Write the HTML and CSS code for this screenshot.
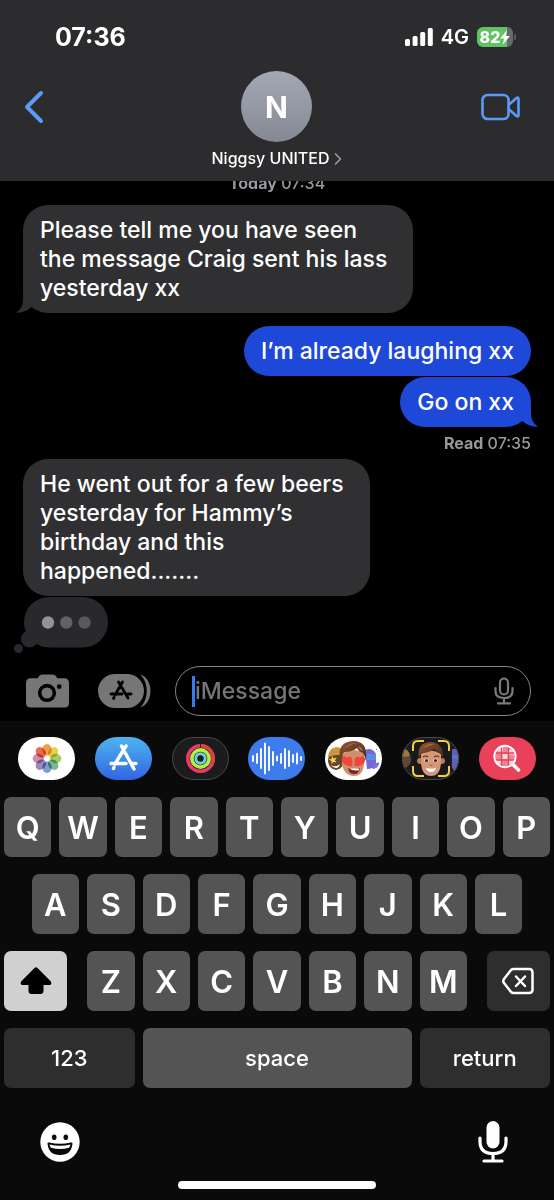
FILE: index.html
```
<!DOCTYPE html>
<html lang="en">
<head>
<meta charset="utf-8">
<meta name="viewport" content="width=device-width, initial-scale=1">
<title>Messages</title>
<link rel="stylesheet" href="styles.css">
</head>
<body>
<div class="phone">
  <header class="header">
    <div class="status">
      <time class="clock">07:36</time>
      <div class="indicators">
        <svg class="signal" viewBox="0 0 28 18" aria-label="Signal"><g fill="#fff"><rect x="0" y="11" width="5" height="7" rx="1.6"/><rect x="7.6" y="8" width="5" height="10" rx="1.6"/><rect x="15.2" y="4" width="5" height="14" rx="1.6"/><rect x="22.8" y="0" width="5" height="18" rx="1.6"/></g></svg>
        <span class="network">4G</span>
        <span class="battery"><span class="level">82</span><svg class="bolt" viewBox="0 0 9 14" aria-hidden="true"><path d="M6.500 0 0 8h3.700L2.300 14 9 5.600H5.100z" fill="#fff"/></svg></span>
      </div>
    </div>
    <nav class="nav">
      <button class="plain back" aria-label="Back"><svg viewBox="0 0 20 32"><path d="M17 2 3 16l14 14" fill="none" stroke="#5c9bf5" stroke-width="4" stroke-linecap="round" stroke-linejoin="round"/></svg></button>
      <button class="plain contact">
        <span class="avatar">N</span>
        <span class="name">Niggsy UNITED <svg viewBox="0 0 8 12" aria-hidden="true"><path d="M1.500 1 6.500 6l-5 5" fill="none" stroke="#99999e" stroke-width="1.700" stroke-linecap="round" stroke-linejoin="round"/></svg></span>
      </button>
      <button class="plain video" aria-label="FaceTime"><svg viewBox="0 0 40 28"><g fill="none" stroke="#5c9bf5" stroke-width="2.600" stroke-linejoin="round"><rect x="2.500" y="2" width="26" height="24" rx="5"/><path d="M28.500 12 36.500 5q2-1.300 2 1v16q0 2.300-2 1L28.500 16"/></g></svg></button>
    </nav>
  </header>

  <main class="thread">
    <p class="stamp"><b>Today</b> 07:34</p>
    <p class="bubble received">Please tell me you have seen<br>the message Craig sent his lass<br>yesterday xx<svg class="tail" viewBox="0 0 24 22" aria-hidden="true"><path d="M7 0v8q0 10-7 13.600 8 1 15-5l9-6z"/></svg></p>
    <p class="bubble sent">I’m already laughing xx</p>
    <p class="bubble sent follow">Go on xx<svg class="tail" viewBox="0 0 24 22" aria-hidden="true"><path d="M17 0v8q0 10 7 13.600-8 1-15-5L0 10z"/></svg></p>
    <p class="receipt"><b>Read</b> 07:35</p>
    <p class="bubble received">He went out for a few beers<br>yesterday for Hammy’s<br>birthday and this<br>happened.......</p>
    <div class="typing" role="img" aria-label="Typing"><svg viewBox="0 0 94 57"><g fill="#29282d"><rect x="10" y="0" width="84" height="50.500" rx="25"/><circle cx="15.500" cy="42" r="8.500"/><circle cx="4.500" cy="51.500" r="4.500"/></g><circle cx="34" cy="25.500" r="6.200" fill="#939297"/><circle cx="52.300" cy="25.500" r="6.200" fill="#626166"/><circle cx="70.500" cy="25.500" r="6.200" fill="#5a595e"/></svg></div>
  </main>

  <form class="composer">
    <button type="button" class="plain camera" aria-label="Camera"><svg viewBox="0 0 44 34"><path d="M5 4h7q1.500-4 5-4h10q3.500 0 5 4h7q5 0 5 5v20q0 5-5 5H5q-5 0-5-5V9q0-5 5-5z" fill="#767676"/><circle cx="21.500" cy="19" r="7.500" fill="none" stroke="#000" stroke-width="3.600"/><circle cx="34" cy="12.500" r="2.400"/></svg></button>
    <button type="button" class="plain apps" aria-label="Apps"><svg viewBox="0 0 54 34"><rect width="46" height="34" rx="17" fill="#767676"/><path d="M42 .500C56 4 56 30 42 33.500 51 26 51 8 42 .500z" fill="#767676"/><g fill="none" stroke="#000" stroke-width="2.800" stroke-linecap="round"><path d="M20.500 8 30 24M24.500 8 17 21M13 20h11M30 20h3M15.500 24.500l.500-1"/></g></svg></button>
    <label class="field">
      <input type="text" aria-label="Message" placeholder="iMessage">
      <svg class="dictate" viewBox="0 0 20 28" aria-hidden="true"><g fill="none" stroke="#7b7b7f" stroke-width="2.200" stroke-linecap="round"><rect x="6" y="1.500" width="8" height="16" rx="4"/><path d="M1.500 11v3q0 7 8.500 7t8.500-7v-3M10 21v5M4 26.300h12"/></g></svg>
    </label>
  </form>

  <section class="keyboard" aria-label="Keyboard">
    <div class="strip">
      <button class="plain app" aria-label="Photos"><svg viewBox="0 0 57 43"><rect width="57" height="43" rx="21.500" fill="#fff"/><g class="petals" transform="translate(29 21.500)"><ellipse cy="-8.700" rx="4.700" ry="5.700" fill="#f0a04a"/><ellipse cy="-8.700" rx="4.700" ry="5.700" fill="#e3d452" transform="rotate(45)"/><ellipse cy="-8.700" rx="4.700" ry="5.700" fill="#a9cb6b" transform="rotate(90)"/><ellipse cy="-8.700" rx="4.700" ry="5.700" fill="#79b795" transform="rotate(135)"/><ellipse cy="-8.700" rx="4.700" ry="5.700" fill="#7d9fd0" transform="rotate(180)"/><ellipse cy="-8.700" rx="4.700" ry="5.700" fill="#9b8abd" transform="rotate(225)"/><ellipse cy="-8.700" rx="4.700" ry="5.700" fill="#cb8db0" transform="rotate(270)"/><ellipse cy="-8.700" rx="4.700" ry="5.700" fill="#ea6a52" transform="rotate(315)"/></g></svg></button>
      <button class="plain app" aria-label="App Store"><svg viewBox="0 0 57 43"><defs><linearGradient id="store" x2="0" y2="1"><stop stop-color="#4db5f0"/><stop offset="1" stop-color="#3264e4"/></linearGradient></defs><rect width="57" height="43" rx="21.500" fill="url(#store)"/><g fill="none" stroke="#fff" stroke-width="3.400" stroke-linecap="round"><path d="M26.500 9 39 32M31 9 20 27M16 26.500h15M37 26.500h4M18.500 31.500l.500-1"/></g></svg></button>
      <button class="plain app" aria-label="Fitness"><svg viewBox="0 0 57 43"><rect x=".5" y=".5" width="56" height="42" rx="21" fill="#1c1c1e" stroke="#49494c"/><g fill="none" stroke-width="3.600"><circle cx="28.500" cy="21.500" r="12.700" stroke="#e93b6b"/><path d="M28.500 8.800a12.700 12.700 0 0 1 11 19" stroke="#df403d"/><circle cx="28.500" cy="21.500" r="8.600" stroke="#b5ed49"/><circle cx="28.500" cy="21.500" r="4.700" stroke="#67d6db" stroke-width="3"/></g><path d="M28.500 7v4" stroke="#1c1c1e"/></svg></button>
      <button class="plain app" aria-label="Audio"><svg viewBox="0 0 57 43"><rect width="57" height="43" rx="21.500" fill="#3e7bed"/><path d="M5 19v5M9 17v9M13 12v19M17 6.500v30M21 10v23M25 15v13M29 19.500v4M33 17v9M37 12v19M41 14v15M45 18v7M49 16.500v10M53 20v3" stroke="#fff" stroke-width="1.900" stroke-linecap="round"/></svg></button>
      <button class="plain app" aria-label="Memoji stickers"><svg viewBox="0 0 57 43"><defs><linearGradient id="hair" x2="1" y2="1"><stop stop-color="#8f5632"/><stop offset="1" stop-color="#4a2a1b"/></linearGradient></defs><rect width="57" height="43" rx="21.500" fill="#fff"/><ellipse cx="11" cy="23" rx="8" ry="10" fill="#6b4429"/><path d="M3 20q1-10 9-10 7 1 8 8-8-1-17 2z" fill="#c6993d"/><path d="m7 19 1.500 2.500 3-1-1.500 3 1.500 2-3-.500-2 2v-3l-3-1.500 3-.500z" fill="#f6d34a"/><path d="M6 28q5 3 9-1-1 4-4 4t-5-3z" fill="#fff"/><path d="M40 13q7-3 11 4v9q-2 6-9 6z" fill="#7468d1"/><path d="M40 17h11v6H40z" fill="#5b8be4"/><path d="m48 27 6-1-2 4-5 1zM51 13l1-1M48 31l2 1" stroke="#7666e1" fill="#8171db"/><path d="M18 16q10-6 21 0v11q-1 12-10 12-10 0-12-12z" fill="#cf8f6c"/><path d="M15 22Q12 5 28 4q15 0 13 18l-3-6q-4-1-6-5-5 4-13 4-2 3-4 7z" fill="url(#hair)"/><path d="M19 12q5-7 13-6-6 1-13 6zM33 9q4 1 5 5-4-1-5-5z" fill="#ad7048"/><path d="M27 29c-5 1-9-2-10-5-1-5 4-6 5-3 3-4 7 0 5 8zM30 29c6 1 9-2 10-5 1-5-4-6-5-3-3-4-7 0-5 8z" fill="#f34439"/><path d="M23 31q7 2 12 0-1 6-6 6t-6-6z" fill="#74272b"/><path d="M24 31.500h10v1.800q-6 1-10-1.800z" fill="#fff"/></svg></button>
      <button class="plain app" aria-label="Memoji"><svg viewBox="0 0 57 43"><defs><clipPath id="pill"><rect width="57" height="43" rx="21.500"/></clipPath></defs><g clip-path="url(#pill)"><rect width="57" height="43" fill="#1c1c1e"/><circle cx="1" cy="23" r="8" fill="#624634"/><path d="M0 11q7 1 8 8L0 20z" fill="#9a7941"/><path d="M50 12h8v22h-5q-4-2-3-9z" fill="#655db4"/><path d="M50 18h8v4h-8z" fill="#527ac6"/><rect x="11" y="3" width="36" height="37" rx="6" fill="#19191b"/><circle cx="18" cy="24" r="3" fill="#bd7c5b"/><circle cx="40" cy="24" r="3" fill="#bd7c5b"/><path d="M19 17q10-7 20 0v9q-1 13-10 13-9 0-10-13z" fill="#d69875"/><path d="M17 22Q14 6 28 5q14 0 13 17l-3-6q-4-1-6-4-5 4-12 4-2 2-3 6z" fill="url(#hair)"/><path d="M21 11q5-5 12-4-6 1-12 4z" fill="#ad7048"/><path d="M21 20q3-2 5 0M32 20q3-2 5 0" stroke="#5c3021" stroke-width="1.200" fill="none"/><ellipse cx="24.500" cy="23.500" rx="2.200" ry="1.800" fill="#fff"/><ellipse cx="33.500" cy="23.500" rx="2.200" ry="1.800" fill="#fff"/><circle cx="24.500" cy="23.500" r="1.600" fill="#332720"/><circle cx="33.500" cy="23.500" r="1.600" fill="#332720"/><path d="M27.500 28q1.500 1 3 0" stroke="#a3624a" fill="none"/><path d="M24 31q5 1.500 10 0-1 4-5 4t-5-4z" fill="#fff"/><path d="M11 14V9q0-5 5-5h6M36 4h6q5 0 5 5v5M47 29v5q0 5-5 5h-6M22 39h-6q-5 0-5-5v-5" fill="none" stroke="#f4ce42" stroke-width="2"/></g><rect x=".5" y=".5" width="56" height="42" rx="21" fill="none" stroke="#49494c"/></svg></button>
      <button class="plain app" aria-label="Images"><svg viewBox="0 0 57 43"><defs><clipPath id="lens"><circle cx="26" cy="19.500" r="10"/></clipPath></defs><rect width="57" height="43" rx="21.500" fill="#e84159"/><circle cx="26" cy="19.500" r="10" fill="#ef8492"/><path d="M19 8.500h5v6h-5zM30 12.500h6v5h-6zM23.500 17h5v5h-5zM17 22.500h6v5h-6zM30 22.500h5v5h-5z" fill="#fbdadd" clip-path="url(#lens)"/><path d="M22.500 9.500v20M29.500 9.500v20M16 16h20M16 23h20" stroke="#e84159" stroke-width="1.300" clip-path="url(#lens)"/><circle cx="26" cy="19.500" r="10.700" fill="none" stroke="#fff" stroke-width="1.900"/><path d="m34.500 28 5 5" stroke="#fff" stroke-width="3.600" stroke-linecap="round"/></svg></button>
    </div>
    <div class="keys">
      <button class="key">Q</button><button class="key">W</button><button class="key">E</button><button class="key">R</button><button class="key">T</button><button class="key">Y</button><button class="key">U</button><button class="key">I</button><button class="key">O</button><button class="key">P</button>
      <button class="key inset">A</button><button class="key">S</button><button class="key">D</button><button class="key">F</button><button class="key">G</button><button class="key">H</button><button class="key">J</button><button class="key">K</button><button class="key">L</button>
      <button class="key shift" aria-label="Shift"><svg viewBox="0 0 32 28"><path d="M14.500 1q1.500-1.300 3 0L30.500 14q2 3-.500 4h-6.500v6q0 3-3 3h-9q-3 0-3-3v-6H2q-2.500-1-.500-4z"/></svg></button><button class="key">Z</button><button class="key">X</button><button class="key">C</button><button class="key">V</button><button class="key">B</button><button class="key">N</button><button class="key">M</button><button class="key delete" aria-label="Delete"><svg viewBox="0 0 32 28"><g fill="none" stroke="#fff" stroke-width="2.500" stroke-linecap="round" stroke-linejoin="round"><path d="M11.500 2H27q3.500 0 3.500 3.500v17Q30.500 26 27 26H11.500Q10 26 9 25L2 16q-1.500-2 0-4L9 3q1-1 2.500-1z"/><path d="m14 9.500 9 9.500M23 9.500 14 19"/></g></svg></button>
      <button class="key word dark">123</button><button class="key word space">space</button><button class="key word dark">return</button>
    </div>
    <div class="tools">
      <button class="plain emoji" aria-label="Emoji"><svg viewBox="0 0 40 40"><circle cx="20" cy="20" r="19.700" fill="#fff"/><g fill="#0a0a0a"><ellipse cx="14.200" cy="15.300" rx="2.300" ry="2.800"/><ellipse cx="25.800" cy="15.300" rx="2.300" ry="2.800"/><path d="M7.500 21.500q0-1.500 1.500-1 11 2.500 22 0 1.500-.500 1.500 1Q31.500 33 20 33T7.500 21.500z"/></g><path d="M9.500 22.500q10.500 2.500 21 0-.200 2-1.500 3.300-9 2.400-18 0-1.300-1.300-1.500-3.300z" fill="#fff"/></svg></button>
      <button class="plain mic" aria-label="Dictate"><svg viewBox="0 0 30 42"><rect x="8.500" y="0" width="13" height="27.500" rx="6.500" fill="#fff"/><g fill="none" stroke="#fff" stroke-width="3.200" stroke-linecap="round"><path d="M2 17v3.500Q2 32.500 15 32.500T28 20.500V17M15 33v6M6 40h18"/></g></svg></button>
    </div>
    <div class="home"></div>
  </section>
</div>
</body>
</html>
```
FILE: styles.css
```
* { box-sizing: border-box; }
body { margin: 0; background: #000; color: #fff; font-family: Inter, "Liberation Sans", sans-serif; }
svg { display: block; width: 100%; height: 100%; overflow: visible; }
p { margin: 0; }
button, input { font: inherit; color: inherit; }
button { cursor: pointer; }
.plain { display: block; padding: 0; border: 0; background: none; }
.phone { display: flex; flex-direction: column; height: 100vh; min-height: 900px; overflow: hidden; }

.header { flex: none; padding: 23px 34px 13px 24px; background: #2c2c2e; }
.status { display: flex; justify-content: space-between; align-items: center; height: 28px; padding: 0 7px 0 31px; }
.clock { font-size: 25px; font-weight: 700; }
.indicators { display: flex; align-items: center; }
.signal { width: 28px; height: 18px; }
.network { margin: 0 8px; font-size: 20px; font-weight: 600; }
.battery { position: relative; display: flex; align-items: center; justify-content: center; width: 36px; height: 20px; border-radius: 6px; background: linear-gradient(90deg, #60c464 82%, #69696b 82%); font-size: 16px; font-weight: 800; }
.battery::after { content: ""; position: absolute; left: 37px; top: 7px; width: 2px; height: 6px; border-radius: 1px; background: #5a5a5c; }
.bolt { width: 10px; height: 15px; }
.nav { display: grid; grid-template-columns: 1fr auto 1fr; align-items: start; padding-top: 20px; }
.back { width: 20px; height: 32px; margin-top: 20px; }
.contact { display: flex; flex-direction: column; align-items: center; gap: 6px; padding-left: 9px; }
.avatar { display: grid; place-items: center; width: 71px; height: 71px; border-radius: 50%; background: linear-gradient(#a4a8b5, #858993); font-size: 30px; font-weight: 700; }
.name { display: flex; align-items: center; gap: 4px; font-size: 16px; font-weight: 500; line-height: 21px; }
.name svg { width: 8px; height: 12px; }
.video { justify-self: end; width: 40px; height: 28px; margin-top: 22px; }

.header { padding-bottom: 12px; }
.thread { display: flex; flex-direction: column; justify-content: flex-end; align-items: flex-start; flex: 1; min-height: 0; overflow: hidden; padding: 0 23px 12px; }
.stamp, .receipt { flex: none; color: #98989e; font-size: 16px; font-weight: 500; line-height: 20px; }
.stamp { align-self: center; margin-bottom: 12px; }
.receipt { align-self: flex-end; margin: 6px 0; }
.bubble { position: relative; flex: none; padding: 11px 17px 10px; border-radius: 25px; font-size: 23px; font-weight: 500; line-height: 29px; }
.received { padding-right: 26px; background: #303032; }
.sent { align-self: flex-end; margin-top: 13px; background: #1e48d7; }
.follow { margin-top: 1px; }
.tail { position: absolute; bottom: 0; width: 24px; height: 22px; }
.received .tail { left: -7px; fill: #303032; }
.sent .tail { right: -7px; fill: #1e48d7; }
.typing { flex: none; width: 94px; height: 57px; margin: 1px 0 0 -9px; }

.composer { display: flex; align-items: center; flex: none; padding: 0 23px 5px 26px; }
.camera { width: 43px; height: 34px; }
.apps { width: 54px; height: 34px; margin: 0 23px 0 29px; }
.field { display: flex; align-items: center; flex: 1; min-width: 0; height: 50px; padding: 0 16px; border: 1px solid #85858a; border-radius: 25px; }
.field input { flex: 1; min-width: 0; height: 31px; padding: 0; border: 0; border-left: 3px solid #397bea; outline: 0; background: none; font-size: 23px; font-weight: 500; line-height: 31px; }
.field input::placeholder { color: #76767a; opacity: 1; }
.dictate { flex: none; width: 20px; height: 28px; }

.keyboard { flex: none; padding-bottom: 11px; background: #0a0a0a; }
.strip { display: flex; justify-content: space-between; padding: 16px 18px 17px; }
.app { width: 57px; height: 43px; }
.petals ellipse { mix-blend-mode: multiply; }
.keys { display: grid; grid-template-columns: repeat(20, 1fr); row-gap: 17px; }
.key { display: flex; align-items: center; justify-content: center; grid-column: span 2; height: 60px; min-width: 0; margin: 0 4px; padding: 0; border: 0; border-radius: 7px; background: #545454; font-size: 31px; font-weight: 600; }
.inset { grid-column: 2 / span 2; }
.shift { grid-column: 1 / span 3; margin-right: 16px; background: #d0d0d0; }
.delete { grid-column: span 3; margin-left: 16px; background: #2e2e2e; }
.shift svg, .delete svg { width: 32px; height: 28px; }
.word { grid-column: span 5; font-size: 22px; font-weight: 500; }
.dark { background: #2e2e2e; }
.space { grid-column: span 10; }
.tools { display: flex; justify-content: space-between; align-items: center; padding: 33px 46px 18px 40px; }
.emoji { width: 40px; height: 40px; }
.mic { width: 30px; height: 42px; }
.home { width: 198px; height: 8px; margin: 0 auto; border-radius: 4px; background: #fff; }
```
